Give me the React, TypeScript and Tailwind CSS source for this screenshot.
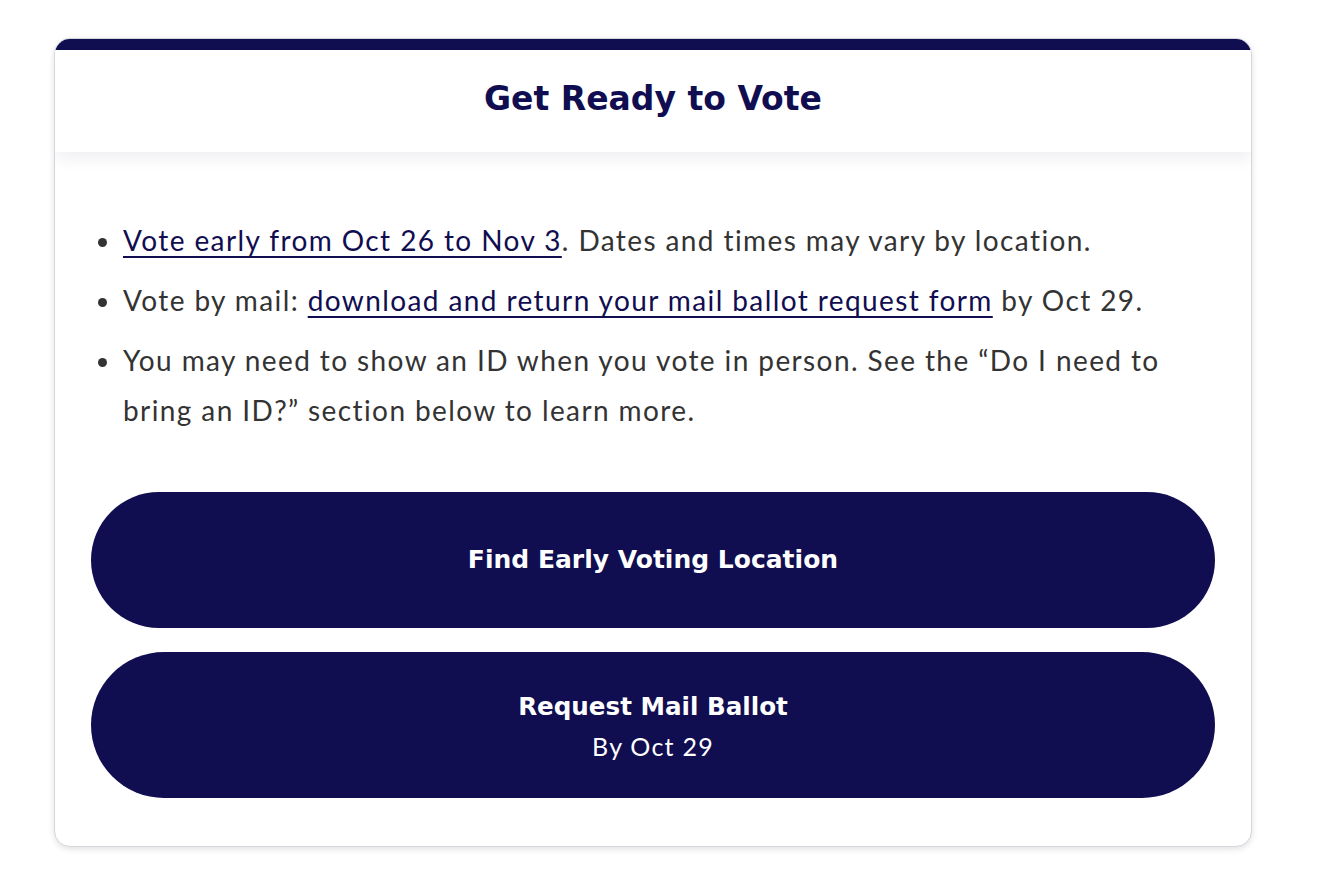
import React from "react";

export default function App() {
  const font = { fontFamily: "Lato, 'Noto Sans', sans-serif" };
  const bold = { fontFamily: "'DejaVu Sans', Lato, sans-serif" };
  return (
    <div className="min-h-screen bg-white pt-[38px] pl-[54px]" style={font}>
      <div className="w-[1198px] overflow-hidden rounded-[16px] border border-[#d4d6dc] bg-white shadow-[0_2px_6px_rgba(0,0,0,0.12)]">
        <div className="h-[11px] bg-[#100d50]" />
        <div className="relative z-10 flex h-[102px] items-center justify-center bg-white pb-[4px] shadow-[0_8px_14px_rgba(20,20,60,0.06)]">
          <h1 className="text-[33px] font-bold text-[#100d50]" style={bold}>Get Ready to Vote</h1>
        </div>
        <div className="px-9 pb-[48px] pt-[63px]">
          <ul className="list-disc pl-[32px] text-[28px] leading-[50px] tracking-[0.05em] text-[#333333]">
            <li className="mb-[10px]">
              <a href="#" className="text-[#100d50] underline underline-offset-[5px] decoration-[2px]">
                Vote early from Oct 26 to Nov 3
              </a>
              . Dates and times may vary by location.
            </li>
            <li className="mb-[10px]">
              Vote by mail:{" "}
              <a href="#" className="text-[#100d50] underline underline-offset-[5px] decoration-[2px]">
                download and return your mail ballot request form
              </a>{" "}
              by Oct 29.
            </li>
            <li>
              You may need to show an ID when you vote in person. See the “Do I need to bring an ID?” section below to learn more.
            </li>
          </ul>
          <div className="mt-[57px] flex flex-col gap-[24px]">
            <button className="flex h-[136px] w-full items-center justify-center rounded-full bg-[#100d50] text-[25px] font-bold text-white" style={bold}>
              Find Early Voting Location
            </button>
            <button className="flex h-[146px] w-full flex-col items-center justify-center rounded-full bg-[#100d50] text-white">
              <span className="text-[24.6px] font-bold leading-[36px]" style={bold}>Request Mail Ballot</span>
              <span className="mt-[6px] text-[25px] leading-[30px] tracking-[0.05em]">By Oct 29</span>
            </button>
          </div>
        </div>
      </div>
    </div>
  );
}
